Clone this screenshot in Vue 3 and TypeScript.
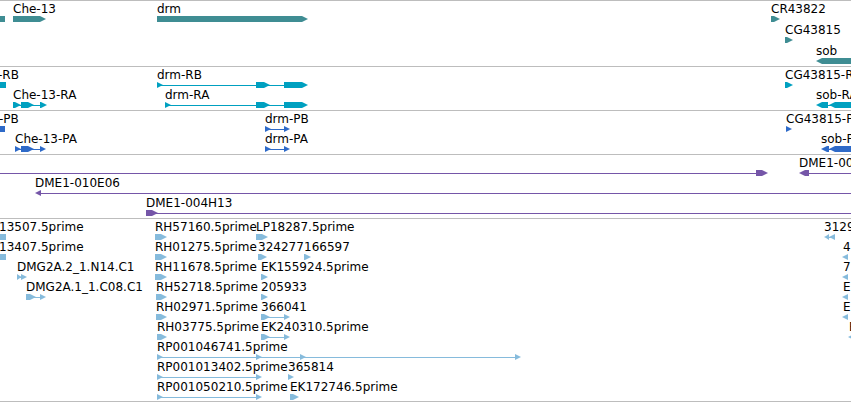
<script setup lang="ts">
type Dir = 'r' | 'l' | 'b'
// kind of block, start, end
type Block = [Dir, number, number]
interface Feature {
  name?: string
  at: number
  blocks: Block[]
}
interface Track {
  id: string
  rows: Feature[][]
}

const f = (name: string, at: number, ...blocks: Block[]): Feature => ({ name, at, blocks })

const EDGE = 4000

const tracks: Track[] = [
  {
    id: 'gene',
    rows: [
      [
        f('', 0, ['b', -5, 5]),
        f('Che-13', 13, ['r', 13, 46]),
        f('drm', 157, ['r', 157, 308]),
        f('CR43822', 771, ['r', 771, 780]),
      ],
      [f('CG43815', 785, ['r', 785, 793])],
      [f('sob', 816, ['l', 816, EDGE])],
    ],
  },
  {
    id: 'transcript',
    rows: [
      [
        f('-RB', -2, ['b', -5, 6]),
        f('drm-RB', 157, ['r', 157, 163], ['r', 256, 270], ['r', 284, 308]),
        f('CG43815-RA', 785, ['r', 785, 793]),
      ],
      [
        f('Che-13-RA', 13, ['r', 13, 21], ['r', 21, 34], ['r', 40, 47]),
        f('drm-RA', 165, ['r', 165, 171], ['r', 256, 270], ['r', 284, 308]),
        f('sob-RA', 816, ['l', 816, 828], ['l', 829, EDGE]),
      ],
    ],
  },
  {
    id: 'protein',
    rows: [
      [
        f('-PB', -1, ['b', -5, 5]),
        f('drm-PB', 265, ['r', 265, 271], ['r', 284, 290]),
        f('CG43815-PA', 786, ['r', 786, 792]),
      ],
      [
        f('Che-13-PA', 15, ['r', 15, 21], ['r', 21, 34], ['r', 40, 46]),
        f('drm-PA', 265, ['r', 265, 271], ['r', 284, 290]),
        f('sob-PA', 821, ['l', 821, 829], ['l', 829, EDGE]),
      ],
    ],
  },
  {
    id: 'clone',
    rows: [
      [
        f('', 0, ['b', -9, -5], ['r', 756, 768]),
        f('DME1-001', 799, ['l', 799, 809], ['b', EDGE, EDGE]),
      ],
      [f('DME1-010E06', 35, ['l', 35, 41], ['b', EDGE, EDGE])],
      [f('DME1-004H13', 146, ['r', 146, 158], ['b', EDGE, EDGE])],
    ],
  },
  {
    id: 'est',
    rows: [
      [
        f('13507.5prime', -1, ['b', -5, 6]),
        f('RH57160.5prime', 155, ['r', 155, 167]),
        f('LP18287.5prime', 256, ['r', 256, 268]),
        f('31290', 824, ['l', 824, 829], ['l', 829, 835]),
      ],
      [
        f('13407.5prime', -1, ['b', -5, 6]),
        f('RH01275.5prime', 155, ['r', 155, 167]),
        f('324277', 258, ['r', 258, 267]),
        f('166597', 304, ['r', 304, 311]),
        f('4', 843, ['l', 842, 848]),
      ],
      [
        f('DMG2A.2_1.N14.C1', 17, ['r', 17, 22], ['r', 21, 27]),
        f('RH11678.5prime', 155, ['r', 155, 167]),
        f('EK155924.5prime', 261, ['r', 261, 268]),
        f('7', 843, ['l', 842, 848]),
      ],
      [
        f('DMG2A.1_1.C08.C1', 26, ['r', 26, 36], ['r', 40, 46]),
        f('RH52718.5prime', 156, ['r', 156, 167]),
        f('205933', 261, ['r', 261, 268]),
        f('E', 843, ['l', 842, 848]),
      ],
      [
        f('RH02971.5prime', 156, ['r', 156, 167]),
        f('366041', 261, ['r', 261, 270], ['r', 284, 290]),
        f('E', 843, ['l', 842, 848]),
      ],
      [
        f('RH03775.5prime', 157, ['r', 157, 167]),
        f('EK240310.5prime', 261, ['r', 261, 270], ['r', 284, 290]),
        f('E', 849, ['l', 848, 854]),
      ],
      [
        f('RP001046741.5prime', 157, ['r', 157, 163], ['r', 256, 262], ['r', 300, 306], ['r', 515, 521]),
      ],
      [
        f('RP001013402.5prime', 157, ['r', 157, 163], ['r', 256, 262]),
        f('365814', 288, ['r', 288, 294]),
      ],
      [
        f('RP001050210.5prime', 157, ['r', 157, 163], ['r', 256, 262]),
        f('EK172746.5prime', 290, ['r', 290, 299]),
      ],
    ],
  },
]

// A block ends in a blunt head that narrows to a point on the centre line.
function shape([dir, a, b]: Block): string {
  const head = Math.min(6, b - a)
  if (dir === 'r') return `M${a} 0H${b - head}L${b - 2} 2L${b} 3L${b - 2} 4L${b - head} 6H${a}Z`
  if (dir === 'l') return `M${b} 0H${a + head}L${a + 2} 2L${a} 3L${a + 2} 4L${a + head} 6H${b}Z`
  return `M${a} 0H${b}V6H${a}Z`
}

const spineStart = (blocks: Block[]): number => blocks[0][1] + 2
const spineWidth = (blocks: Block[]): number => blocks[blocks.length - 1][2] - 4 - blocks[0][1]
</script>

<template>
  <main class="browser">
    <section v-for="track in tracks" :key="track.id" class="track" :class="track.id">
      <div v-for="(row, r) in track.rows" :key="r" class="row">
        <div class="labels">
          <span
            v-for="feature in row"
            :key="feature.at"
            class="label"
            :style="{ left: feature.at + 'px' }"
          >{{ feature.name }}</span>
        </div>
        <svg class="glyphs" height="6" aria-hidden="true">
          <template v-for="feature in row" :key="feature.at">
            <rect
              v-if="feature.blocks.length > 1"
              class="spine"
              :x="spineStart(feature.blocks)"
              y="3"
              :width="spineWidth(feature.blocks)"
              height="1"
            />
            <path v-for="(block, b) in feature.blocks" :key="b" :d="shape(block)" />
          </template>
        </svg>
      </div>
    </section>
  </main>
</template>

<style>
body {
  margin: 0;
  background: #fff;
}
</style>

<style scoped>
.browser {
  overflow: hidden;
  border-bottom: 1px solid #bdbdbd;
  color: #000;
  font: 12px/17px "DejaVu Sans", sans-serif;
}
.track {
  border-top: 1px solid #bdbdbd;
  padding-bottom: 3px;
}
.row {
  display: flex;
  flex-direction: column;
  height: 20px;
}
.labels {
  position: relative;
  flex: 0 0 15px;
}
.label {
  position: absolute;
  top: 0;
  white-space: nowrap;
}
.glyphs {
  display: block;
  flex: none;
  width: 100%;
}
.spine {
  shape-rendering: crispEdges;
}
.gene {
  padding-bottom: 2px;
  fill: #3f8d93;
}
.gene .row {
  height: 21px;
}
.transcript {
  fill: #00a0c0;
}
.protein {
  fill: #2e6ac8;
}
.clone {
  fill: #7556a8;
}
.est {
  padding-bottom: 2px;
  fill: #86bbdc;
}
</style>
